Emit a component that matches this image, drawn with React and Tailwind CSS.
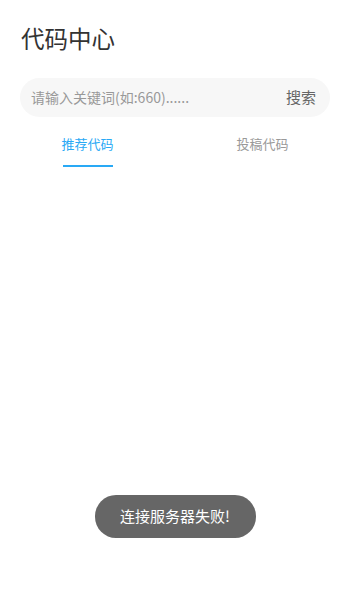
import React, { useState } from "react"

const font = { fontFamily: '"Noto Sans CJK SC", "Noto Sans", sans-serif' }

const App = () => {
  const [activeTab, setActiveTab] = useState("recommend")

  return (
    <div className="relative w-[350px] h-[600px] bg-white overflow-hidden" style={font}>
      {/* 标题 */}
      <div className="pl-[21px] pt-[24px] h-[78px]">
        <h1 className="text-[23.5px] leading-[28px] text-[#333]">代码中心</h1>
      </div>

      {/* 搜索栏 */}
      <div className="mx-[20px] h-[39px] rounded-full bg-[#f7f7f7] flex items-center pl-[11px] pr-[14px]">
        <input
          className="flex-1 bg-transparent outline-none text-[14px] text-[#333] placeholder:text-[#999]"
          placeholder="请输入关键词(如:660)......"
        />
        <span className="text-[15px] text-[#666]">搜索</span>
      </div>

      {/* 标签 */}
      <div className="flex mt-[16px]">
        <button
          onClick={() => setActiveTab("recommend")}
          className="flex-1 flex flex-col items-center"
        >
          <span className={`text-[13px] leading-[22px] ${activeTab === "recommend" ? "text-[#29a9f5]" : "text-[#999]"}`}>推荐代码</span>
          <span className={`mt-[10px] w-[50px] h-[2px] ${activeTab === "recommend" ? "bg-[#29a9f5]" : "bg-transparent"}`}></span>
        </button>
        <button
          onClick={() => setActiveTab("submit")}
          className="flex-1 flex flex-col items-center"
        >
          <span className={`text-[13px] leading-[22px] ${activeTab === "submit" ? "text-[#29a9f5]" : "text-[#999]"}`}>投稿代码</span>
          <span className={`mt-[10px] w-[50px] h-[2px] ${activeTab === "submit" ? "bg-[#29a9f5]" : "bg-transparent"}`}></span>
        </button>
      </div>

      {/* 提示 */}
      <div className="absolute left-0 right-0 top-[495px] flex justify-center">
        <div className="h-[43px] w-[161px] rounded-[21px] bg-[#666] text-white text-[15px] flex items-center justify-center">
          连接服务器失败!
        </div>
      </div>
    </div>
  )
}

export default App
